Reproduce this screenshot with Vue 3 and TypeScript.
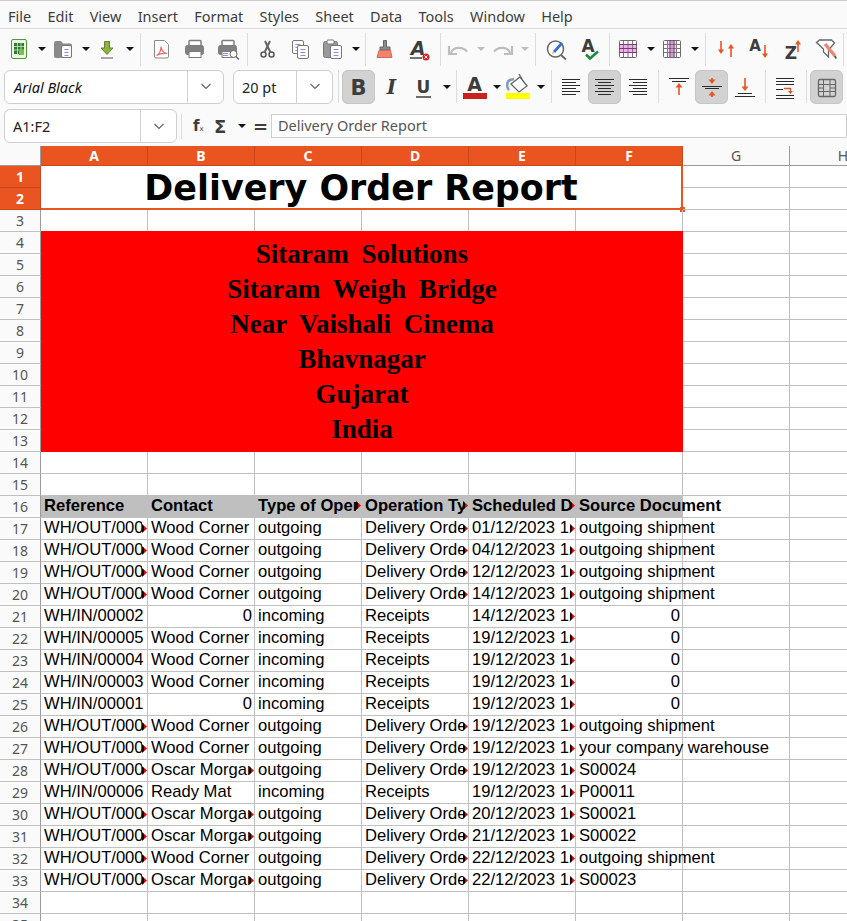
<template>
  <div class="window">
    <nav class="menubar">
      <span v-for="m in menus" :key="m">{{ m }}</span>
    </nav>

    <div class="toolbar first">
      <template v-for="(t, i) in standardBar" :key="i">
        <span v-if="t.sep" class="sep" :style="{ marginLeft: t.sep[0] + 'px', marginRight: t.sep[1] + 'px' }"></span>
        <span v-else-if="t.drop" class="drop" :class="{ off: t.off }"></span>
        <svg v-else class="btn" viewBox="0 0 33 34" v-html="icons[t.icon!]"></svg>
      </template>
    </div>

    <div class="toolbar second">
      <div class="combo font-box">
        <span class="combo-text">Arial Black</span>
        <span class="combo-arrow"><svg width="12" height="7" viewBox="0 0 12 7"><path d="M1.5 1l4.5 4.5L10.500 1" /></svg></span>
      </div>
      <div class="combo size-box">
        <span class="combo-text plain">20 pt</span>
        <span class="combo-arrow"><svg width="12" height="7" viewBox="0 0 12 7"><path d="M1.500 1l4.500 4.500L10.500 1" /></svg></span>
      </div>
      <template v-for="(t, i) in formatBar" :key="i">
        <span v-if="t.sep" class="sep" :style="{ marginLeft: t.sep[0] + 'px', marginRight: t.sep[1] + 'px' }"></span>
        <span v-else-if="t.drop" class="drop"></span>
        <svg v-else class="btn" :class="{ active: t.active }" viewBox="0 0 33 34" v-html="icons[t.icon!]"></svg>
      </template>
    </div>

    <div class="formula-bar">
      <div class="combo name-box">
        <span class="combo-text plain">A1:F2</span>
        <span class="combo-arrow"><svg width="12" height="7" viewBox="0 0 12 7"><path d="M1.500 1l4.500 4.500L10.500 1" /></svg></span>
      </div>
      <span class="sep short"></span>
      <span class="fx">f<small>x</small></span>
      <span class="sigma">Σ</span>
      <span class="drop small"></span>
      <span class="equals">=</span>
      <div class="formula-input">Delivery Order Report</div>
    </div>

    <div class="sheet">
      <div class="corner"></div>
      <div v-for="c in columns" :key="c" class="col-head" :class="{ picked: c < 'G' }">{{ c }}</div>

      <template v-for="row in rows" :key="row.n">
        <div class="row-head" :class="{ picked: row.n < 3 }">{{ row.n }}</div>
        <div v-for="(cell, i) in row.cells" :key="i" class="cell" :class="cell.cls">
          <span v-if="cell.text" class="val">{{ cell.text }}</span>
          <template v-if="cell.lines">
            <p v-for="line in cell.lines" :key="line">{{ line }}</p>
          </template>
        </div>
      </template>
    </div>
  </div>
</template>

<script setup lang="ts">
interface BarItem {
  icon?: string
  drop?: boolean
  off?: boolean
  sep?: [number, number]
  active?: boolean
}

interface Cell {
  text?: string
  lines?: string[]
  cls?: string
}

const menus = ['File', 'Edit', 'View', 'Insert', 'Format', 'Styles', 'Sheet', 'Data', 'Tools', 'Window', 'Help']
const columns = ['A', 'B', 'C', 'D', 'E', 'F', 'G', 'H']

const ic = (icon: string, active = false): BarItem => ({ icon, active })
const drop: BarItem = { drop: true }
const sep = (l: number, r: number): BarItem => ({ sep: [l, r] })

const standardBar: BarItem[] = [
  ic('newdoc'), drop, ic('open'), drop, ic('save'), drop, sep(5, 4),
  ic('pdf'), ic('print'), ic('preview'), sep(3, 3),
  ic('cut'), ic('copy'), ic('paste'), drop, sep(4, 3),
  ic('clone'), ic('clear'), sep(5, 1),
  ic('undo'), { drop: true, off: true }, ic('redo'), { drop: true, off: true }, sep(5, 4),
  ic('find'), ic('spell'), sep(3, 2),
  ic('tablerow'), drop, ic('tablecol'), drop, sep(5, 4),
  ic('sort'), ic('sortasc'), ic('sortdesc'), ic('filter'), sep(1, 0),
]

const formatBar: BarItem[] = [
  sep(5, 3), ic('bold', true), ic('italic'), ic('underline'), drop, sep(4, 1),
  ic('fontcolor'), drop, ic('highlight'), drop, sep(5, 3),
  ic('left'), ic('center', true), ic('right'), sep(4, 3),
  ic('top'), ic('middle', true), ic('bottom'), sep(4, 3),
  ic('wrap'), sep(4, 3), ic('merge', true),
]

const orange = '#e95420'
const dark = '#3d3d3d'

// vertical orange arrow, tip at "to"
const arrow = (x: number, from: number, to: number, w = 3.5): string => {
  const d = to < from ? 1 : -1
  return `<path d="M${x} ${from}V${to + d * 3}" stroke="${orange}" stroke-width="1.600" fill="none"/>` +
    `<path d="M${x - w} ${to + d * 4.500}L${x} ${to}L${x + w} ${to + d * 4.500}Z" fill="${orange}"/>`
}

const bars = (list: [number, number, number][]): string =>
  list.map(([x1, x2, y]) => `<path d="M${x1} ${y}H${x2}" stroke="#2b2b2b" stroke-width="1"/>`).join('')

const glyph = (s: string, x: number, y: number, size: number, fill = dark, extra = ''): string =>
  `<text x="${x}" y="${y}" font-family="DejaVu Sans" font-weight="700" font-size="${size}" text-anchor="middle" fill="${fill}" ${extra}>${s}</text>`

const gridIcon = (hot: string): string => {
  let s = hot
  for (const x of [11.500, 16, 20.500]) s += `<path d="M${x} 8v17" stroke="#7a7a7a"/>`
  for (const y of [12.500, 16.500, 20.500]) s += `<path d="M7 ${y}h18" stroke="#7a7a7a"/>`
  return s + `<rect x="7.500" y="8.500" width="17" height="17" rx="1" fill="none" stroke="#6a6a6a"/>`
}

const doc = (x: number, y: number, w: number, h: number): string =>
  `<rect x="${x}" y="${y}" width="${w}" height="${h}" rx="1.500" fill="#fff" stroke="#777"/>` +
  `<path d="M${x + 3} ${y + 4}h${w - 6}M${x + 3} ${y + 7}h${w - 6}M${x + 3} ${y + 10}h${w - 6}" stroke="#8a8fd0"/>`

const printer = `<rect x="11" y="8.500" width="12" height="7" rx="1" fill="#fff" stroke="#7d7d7d" stroke-width="1.500"/>` +
  `<rect x="7.500" y="13.500" width="18" height="9" rx="2" fill="#808080" stroke="#7d7d7d"/>` +
  `<rect x="11" y="19.500" width="12" height="6" fill="#fff" stroke="#7d7d7d"/>`

const icons: Record<string, string> = {
  newdoc: `<rect x="8.500" y="7.500" width="15" height="19" rx="1.500" fill="#eef6e8" stroke="#4e9a2e"/>` +
    `<rect x="11" y="11" width="10" height="11" fill="#2f7d33"/>` +
    `<path d="M11 14.500h10M11 18h10M14.500 11v11M18 11v11" stroke="#cfe6c8" stroke-width=".8"/>` +
    `<path d="M16 23v-4l2.500-2 2.500 2v4z" fill="#7cc14a"/>`,
  open: `<path d="M7 11a2 2 0 0 1 2-2h5l2 2.500h7a2 2 0 0 1 2 2V24a2 2 0 0 1-2 2H9a2 2 0 0 1-2-2z" fill="#8a8a8a"/>` +
    doc(14.500, 13.500, 10, 12),
  save: `<path d="M13.500 9.500h5V16H22l-6 6.500-6-6.500h3.500z" fill="#8ab53a" stroke="#6a7f3a"/><path d="M10 26h12" stroke="#555" stroke-width="1.200"/>`,
  pdf: `<path d="M9.500 8.500h10l4 4v12a1.500 1.500 0 0 1-1.500 1.500H11a1.500 1.500 0 0 1-1.500-1.500z" fill="#fff" stroke="#8a8a8a"/>` +
    `<path d="M11.500 23.500c3-1.500 4.500-5 4.500-9 .5 4 3 6.500 6 7-4-.5-7 0-10.500 2z" fill="none" stroke="#ee6b6b" stroke-width="1.200"/>`,
  print: printer,
  preview: printer + `<circle cx="22.500" cy="22" r="3.500" fill="#fff" stroke="#666"/><path d="M25 24.500l3 3" stroke="#666" stroke-width="1.500"/>` +
    `<path d="M12 21.500h5M12 23.500h5" stroke="#8a8fd0"/>`,
  cut: `<circle cx="12.500" cy="22.500" r="2.500" fill="none" stroke="#555" stroke-width="1.500"/><circle cx="20.500" cy="22.500" r="2.500" fill="none" stroke="#555" stroke-width="1.500"/>` +
    `<path d="M13.500 20.500L19 9M19.500 20.500L14 9" stroke="#666" stroke-width="2"/>`,
  copy: doc(8.500, 8.500, 11, 13) + doc(13.500, 13.500, 11, 13),
  paste: `<rect x="6.500" y="9.500" width="14" height="16" rx="2" fill="#999" stroke="#777"/><rect x="10" y="8" width="7" height="4" rx="1" fill="#fff" stroke="#777"/>` +
    doc(13.500, 13.500, 11, 13),
  clone: `<path d="M14.500 8.500h3V15h3.500v3h-10v-3h3.500z" fill="#8b8b8b" stroke="#666"/>` +
    `<path d="M10 18.500h11.500l1.500 7H8z" fill="#f2836f" stroke="#d56a58"/>`,
  clear: glyph('A', 16, 23, 19, dark, 'font-style="italic"') + `<path d="M8 26h12" stroke="#444" stroke-width="1.500"/><circle cx="24" cy="25" r="3.500" fill="#d2232a"/><path d="M22.500 23.500l3 3m0-3l-3 3" stroke="#fff"/>`,
  undo: `<path d="M9 21c2-6 11-7 16-1.500" fill="none" stroke="#bdbdbd" stroke-width="2.200"/><path d="M7 14v8h8" fill="none" stroke="#bdbdbd" stroke-width="2.200"/>`,
  redo: `<path d="M24 21c-2-6-11-7-16-1.500" fill="none" stroke="#bdbdbd" stroke-width="2.200"/><path d="M26 14v8h-8" fill="none" stroke="#bdbdbd" stroke-width="2.200"/>`,
  find: `<circle cx="15.500" cy="17" r="8" fill="#fff" stroke="#666" stroke-width="1.500"/><path d="M21 23l5 4.500" stroke="#666" stroke-width="1.800"/>` +
    `<path d="M13 19l8-9 2 2-8 9z" fill="#2f6fd6"/><path d="M13 19l-1 3 3-1z" fill="#e8b27a"/>`,
  spell: glyph('A', 15, 20, 17) + `<path d="M13 22.500l4 4 8-7" fill="none" stroke="#1c8a3c" stroke-width="2.600"/>`,
  tablerow: gridIcon(`<rect x="7" y="12.500" width="18" height="8" fill="#e6b8e0"/>`) + `<path d="M7 12.500h18M7 16.500h18M7 20.500h18" stroke="#8e2a8e"/>`,
  tablecol: gridIcon(`<rect x="11.500" y="8" width="9" height="17" fill="#f3dff0"/>`) + `<path d="M14 8v17M18 8v17" stroke="#8e2a8e" stroke-width="1.200"/>`,
  sort: arrow(11, 9, 22, 3) + arrow(21, 25, 12, 3),
  sortasc: glyph('A', 12, 19, 15) + arrow(22, 13, 26, 3),
  sortdesc: glyph('Z', 15, 27, 17) + arrow(22, 20, 8, 3),
  filter: `<path d="M7.500 10.500l3-2.500h12l3 3-6 7v7l-5-5v-3z" fill="#fff" stroke="#666" stroke-width="1.300"/>` +
    `<path d="M16 12l10 12" stroke="#e9887a" stroke-width="3.500"/><path d="M26 24l1 2.500" stroke="#555" stroke-width="2"/>`,
  bold: glyph('B', 16.500, 25, 21),
  italic: `<text x="16.500" y="24" font-family="DejaVu Serif" font-style="italic" font-weight="700" font-size="20" text-anchor="middle" fill="${dark}">I</text>`,
  underline: glyph('U', 15.500, 23, 17) + `<path d="M8 27h15" stroke="${dark}" stroke-width="1.500"/>`,
  fontcolor: glyph('A', 16.500, 21, 19) + `<rect x="5" y="23" width="24" height="6" fill="#c9211e"/>`,
  highlight: `<path d="M7 20c-3-3-2-9 1-10l4-1" fill="none" stroke="#7e9cc0" stroke-width="2.500"/><path d="M9 14l9-7 7 9-8 6z" fill="#fff" stroke="#666" stroke-width="1.300"/>` +
    `<path d="M17 4l3 5" stroke="#666" stroke-width="1.300"/><rect x="4" y="23" width="24" height="6" fill="#ffff00"/>`,
  left: bars([[7, 25, 9.500], [7, 21, 12.500], [7, 25, 15.500], [7, 21, 18.500], [7, 25, 21.500], [7, 21, 24.500]]),
  center: bars([[7, 26, 9.500], [10, 23, 12.500], [7, 26, 15.500], [10, 23, 18.500], [7, 26, 21.500], [10, 23, 24.500]]),
  right: bars([[8, 26, 9.500], [12, 26, 12.500], [8, 26, 15.500], [12, 26, 18.500], [8, 26, 21.500], [12, 26, 24.500]]),
  top: bars([[7, 27, 8.500], [10, 24, 11.500]]) + arrow(17, 25, 13),
  middle: bars([[7, 27, 16.500], [10, 24, 18.500]]) + arrow(17, 8, 14) + arrow(17, 27, 21),
  bottom: bars([[10, 24, 23.500], [7, 27, 26.500]]) + arrow(17, 8, 21),
  wrap: bars([[7, 25, 8.500], [7, 25, 11.500], [7, 25, 14.500], [7, 25, 25.500], [7, 25, 28.500]]) +
    bars([[7, 14, 19.500]]) + `<path d="M15 18.500h6.500v3" fill="none" stroke="${orange}" stroke-width="1.300"/><path d="M19 21l2.500 3 2.500-3z" fill="${orange}"/>`,
  merge: `<rect x="8.500" y="9.500" width="17" height="17" rx="1.500" fill="none" stroke="#666" stroke-width="1.300"/>` +
    `<path d="M8.500 14.500h5M8.500 18h5M8.500 21.500h5M20 14.500h5.500M20 18h5.500M20 21.500h5.500M13.500 14.500v7M20 14.500v7M13.500 14.500h6.500M13.500 21.500h6.500M13.500 9.500v5M20 9.500v5M13.500 21.500v5M20 21.500v5" stroke="#666" fill="none"/>`,
}

const OUT = 'WH/OUT/000'
const IN = 'WH/IN/0000'
const wood = 'Wood Corner'
const oscar = 'Oscar Morgan'
const ship = 'outgoing shipment'

type Row = [string, string, string, string, string]
const data: Row[] = [
  [OUT + '01', wood, 'out', '01/12/2023', ship],
  [OUT + '02', wood, 'out', '04/12/2023', ship],
  [OUT + '03', wood, 'out', '12/12/2023', ship],
  [OUT + '04', wood, 'out', '14/12/2023', ship],
  [IN + '2', '0', 'in', '14/12/2023', '0'],
  [IN + '5', wood, 'in', '19/12/2023', '0'],
  [IN + '4', wood, 'in', '19/12/2023', '0'],
  [IN + '3', wood, 'in', '19/12/2023', '0'],
  [IN + '1', '0', 'in', '19/12/2023', '0'],
  [OUT + '05', wood, 'out', '19/12/2023', ship],
  [OUT + '06', wood, 'out', '19/12/2023', 'your company warehouse'],
  [OUT + '07', oscar, 'out', '19/12/2023', 'S00024'],
  [IN + '6', 'Ready Mat', 'in', '19/12/2023', 'P00011'],
  [OUT + '08', oscar, 'out', '20/12/2023', 'S00021'],
  [OUT + '09', oscar, 'out', '21/12/2023', 'S00022'],
  [OUT + '10', wood, 'out', '22/12/2023', ship],
  [OUT + '11', oscar, 'out', '22/12/2023', 'S00023'],
]

const blanks = (n: number): Cell[] => Array.from({ length: n }, () => ({}))

const rows = Array.from({ length: 35 }, (_, i) => {
  const n = i + 1
  let cells: Cell[] = blanks(8)
  if (n === 1) {
    cells = [{ text: 'Delivery Order Report', cls: 'title' }, ...blanks(2)]
  } else if (n === 2 || (n > 4 && n < 14)) {
    cells = blanks(2)
  } else if (n === 4) {
    cells = [{
      lines: ['Sitaram Solutions', 'Sitaram Weigh Bridge', 'Near Vaishali Cinema', 'Bhavnagar', 'Gujarat', 'India'],
      cls: 'banner',
    }, ...blanks(2)]
  } else if (n === 16) {
    cells = [
      { text: 'Reference', cls: 'th' },
      { text: 'Contact', cls: 'th' },
      { text: 'Type of Operation', cls: 'th cut' },
      { text: 'Operation Type', cls: 'th cut' },
      { text: 'Scheduled Date', cls: 'th cut' },
      { text: 'Source Document', cls: 'th spill' },
      ...blanks(2),
    ]
  } else if (n > 16 && n < 34) {
    const [ref, contact, kind, date, source] = data[n - 17]
    const out = kind === 'out'
    cells = [
      { text: ref, cls: out ? 'cut' : '' },
      { text: contact, cls: contact === '0' ? 'num' : contact === oscar ? 'cut' : '' },
      { text: out ? 'outgoing' : 'incoming' },
      { text: out ? 'Delivery Orders' : 'Receipts', cls: out ? 'cut' : '' },
      { text: date + ' 12:00:00', cls: 'cut' },
      { text: source, cls: source === '0' ? 'num' : 'spill' },
      ...blanks(2),
    ]
  }
  return { n, cells }
})
</script>

<style>
html,
body {
  margin: 0;
  overflow: hidden;
  background: #fafafa;
}
</style>

<style scoped>
.window {
  width: 847px;
  height: 921px;
  overflow: hidden;
  background: #fafafa;
  border-top: 1px solid #cfcfcf;
  box-sizing: border-box;
  padding-top: 3px;
  font-family: 'Noto Sans', sans-serif;
  color: #3d3d3d;
}

.menubar {
  display: flex;
  gap: 16.250px;
  height: 24px;
  padding-left: 8px;
  align-items: center;
  font-size: 14.500px;
  border-bottom: 1px solid #dcdcdc;
}

.toolbar {
  display: flex;
  align-items: center;
}

.toolbar.first {
  height: 34px;
  padding: 3px 0 0 3px;
}

.toolbar.second {
  height: 35px;
  margin-top: 3px;
  padding-left: 4px;
}

.btn {
  width: 33px;
  height: 34px;
  flex: none;
  border-radius: 6px;
}

.btn.active {
  background: #d2d2d2;
  outline: 1px solid #c6c6c6;
  outline-offset: -1px;
}

.drop {
  width: 11px;
  height: 10px;
  flex: none;
  position: relative;
}

.drop::after {
  content: '';
  position: absolute;
  left: 2px;
  top: 3px;
  border-left: 4px solid transparent;
  border-right: 4px solid transparent;
  border-top: 4px solid #111;
}

.drop.off::after {
  border-top-color: #bdbdbd;
}

.sep {
  width: 1px;
  height: 33px;
  flex: none;
  background: #dcdcdc;
}

.sep.short {
  height: 25px;
  margin: 0 11px 0 4px;
}

.combo {
  display: flex;
  height: 34px;
  box-sizing: border-box;
  flex: none;
  background: #fff;
  border: 1px solid #cfcfcf;
  border-radius: 6px;
  align-items: center;
}

.font-box {
  width: 220px;
  margin-right: 9px;
}

.size-box {
  width: 100px;
}

.name-box {
  width: 173px;
}

.combo-text {
  flex: 1;
  padding-left: 9px;
  font-size: 14.500px;
  font-style: italic;
  color: #111;
}

.combo-text.plain {
  font-style: normal;
  padding-left: 8px;
  color: #222;
}

.combo-arrow {
  display: flex;
  width: 35px;
  height: 100%;
  align-items: center;
  justify-content: center;
  border-left: 1px solid #cfcfcf;
}

.combo-arrow path {
  fill: none;
  stroke: #666;
  stroke-width: 1.200;
}

.formula-bar {
  display: flex;
  align-items: center;
  height: 34px;
  margin-top: 5px;
  padding-left: 4px;
}

.fx {
  width: 21px;
  font-family: 'DejaVu Sans', sans-serif;
  font-size: 15px;
  font-weight: 700;
}

.fx small {
  font-size: 7px;
  font-weight: 400;
}

.sigma {
  width: 22px;
  font-family: 'DejaVu Sans', sans-serif;
  font-size: 18px;
  font-weight: 700;
}

.drop.small {
  width: 17px;
}

.equals {
  width: 18px;
  font-family: 'DejaVu Sans', sans-serif;
  font-size: 18px;
  font-weight: 700;
}

.formula-input {
  flex: 1;
  height: 24px;
  box-sizing: border-box;
  background: #fff;
  border: 1px solid #cfcfcf;
  padding-left: 6px;
  font-size: 14.500px;
  line-height: 21px;
  color: #555;
}

.sheet {
  display: grid;
  grid-template-columns: 41px repeat(8, 107px);
  grid-template-rows: 20px repeat(35, 22px);
  margin-top: 3px;
  width: 897px;
  background: #fff;
}

.corner,
.col-head,
.row-head {
  box-sizing: border-box;
  background: #fafafa;
  border-right: 1px solid #9c9c9c;
  border-bottom: 1px solid #9c9c9c;
  text-align: center;
  font-size: 14px;
  color: #555;
}

.col-head {
  line-height: 19px;
}

.row-head {
  line-height: 21px;
  border-bottom-color: #c0c0c0;
}

.col-head.picked,
.row-head.picked {
  background: #e95420;
  border-color: #c9481b;
  color: #fff;
  font-weight: 700;
}

.cell {
  position: relative;
  box-sizing: border-box;
  padding: 0 2px 0 3px;
  border-right: 1px solid #c0c0c0;
  border-bottom: 1px solid #c0c0c0;
  font-family: 'Liberation Sans', Arial, sans-serif;
  font-size: 16.600px;
  line-height: 19px;
  color: #000;
  white-space: nowrap;
}

.cell.cut {
  padding-right: 5px;
}

.cell.cut .val {
  display: block;
  overflow: hidden;
}

.cell.num {
  text-align: right;
}

.cell.th {
  margin-top: -1px;
  padding-top: 1px;
  background: #bfbfbf;
  font-weight: 700;
  border-right-color: #bfbfbf;
}

.cell.cut::after {
  content: '';
  position: absolute;
  right: 0;
  top: 6px;
  width: 5px;
  height: 9px;
  clip-path: polygon(0 0, 100% 50%, 0 100%);
  background: linear-gradient(to right, #000 40%, #e00000 40%);
}

.cell.title {
  grid-column: span 6;
  grid-row: span 2;
  border-right: 2px solid #e95420;
  border-bottom: 2px solid #e95420;
  text-align: center;
  font-family: 'DejaVu Sans', sans-serif;
  font-size: 34.900px;
  font-weight: 700;
  line-height: 44px;
  padding: 0;
}

.cell.title::after {
  content: '';
  position: absolute;
  right: -4px;
  bottom: -4px;
  width: 5px;
  height: 5px;
  background: #e95420;
}

.cell.banner {
  grid-column: span 6;
  grid-row: span 10;
  display: flex;
  flex-direction: column;
  justify-content: center;
  margin-top: -1px;
  background: #ff0000;
  border: 0;
  padding: 0;
  text-align: center;
  font-family: 'Liberation Serif', serif;
  font-size: 27px;
  font-weight: 700;
  word-spacing: 6px;
}

.banner p {
  margin: 0;
  line-height: 35px;
}
</style>
